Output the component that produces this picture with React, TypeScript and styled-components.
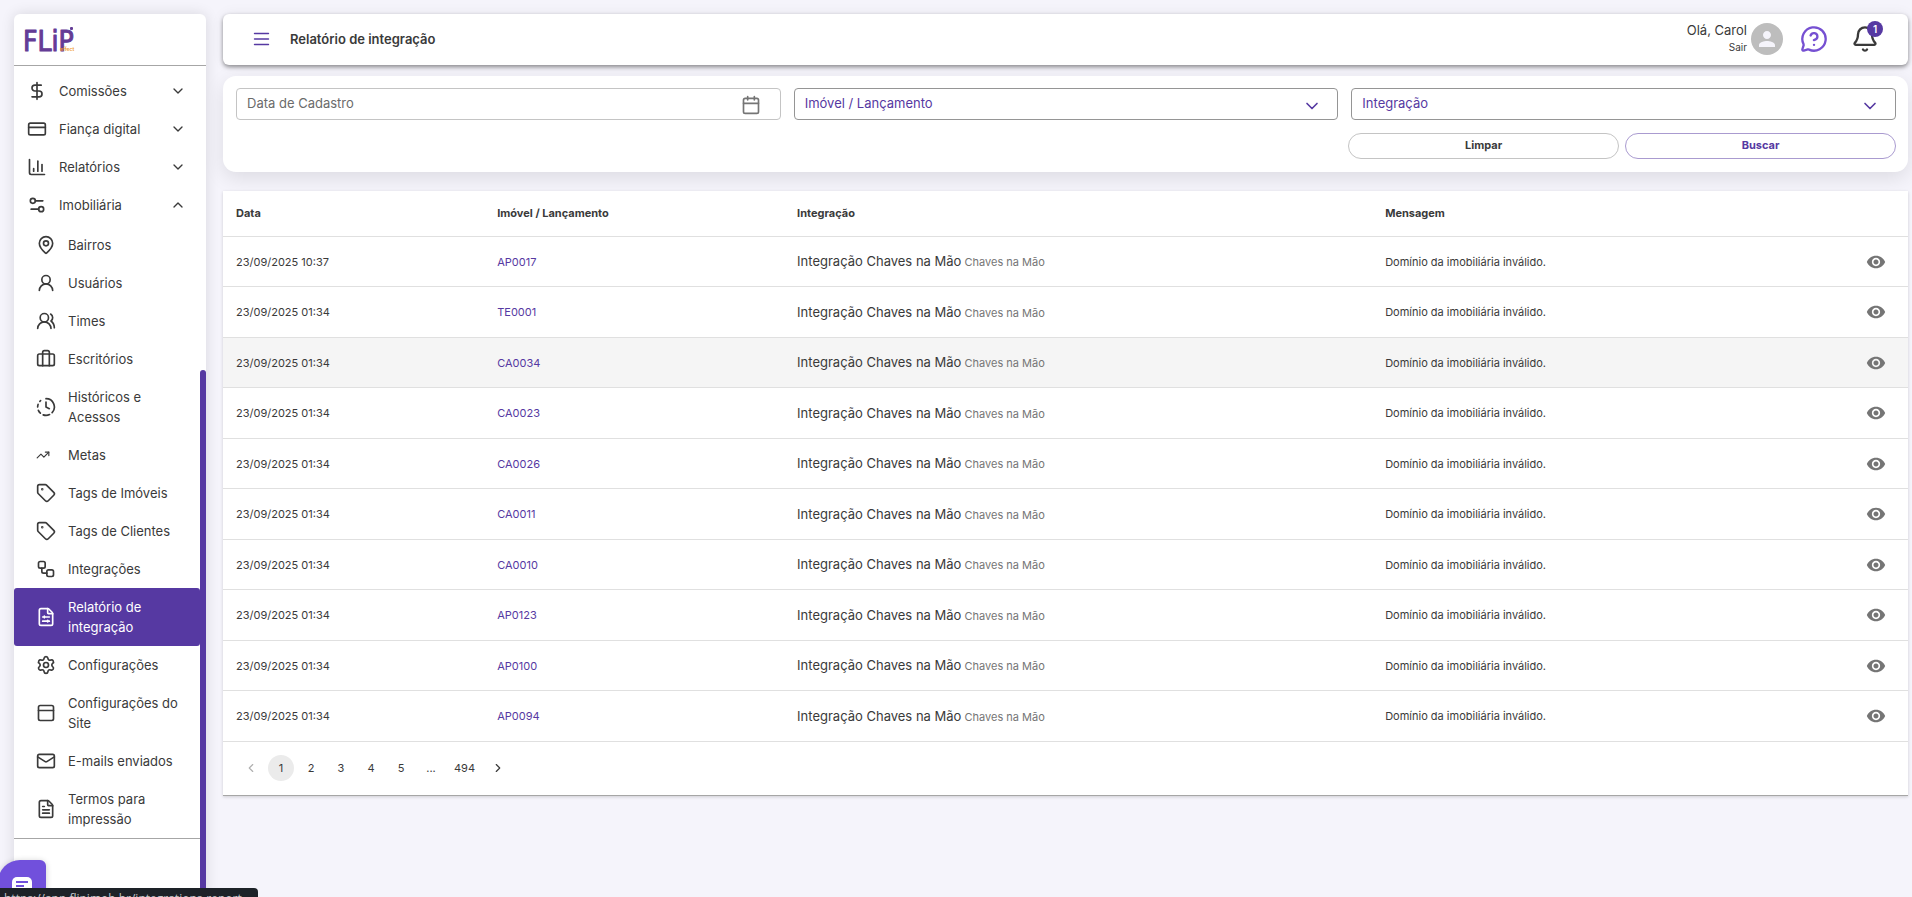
import React from "react";
import styled, { createGlobalStyle } from "styled-components";
import {
  Bell,
  Briefcase,
  Calendar,
  ChartColumn,
  ChevronDown,
  ChevronLeft,
  ChevronRight,
  ChevronUp,
  ClockFading,
  CreditCard,
  DollarSign,
  FileSliders,
  FileText,
  Mail,
  MapPin,
  MessageCircleQuestionMark,
  PanelTop,
  Settings,
  Settings2,
  Tag,
  TrendingUp,
  UserRound,
  UsersRound,
  Workflow,
  type LucideIcon,
} from "lucide-react";
import { MdPerson, MdVisibility } from "react-icons/md";

const c = {
  page: "#f5f4fb",
  text: "#3a3a3a",
  muted: "#757575",
  brand: "#5639a2",
  line: "#e0e0e0",
};

const GlobalStyle = createGlobalStyle`
  *, *::before, *::after { box-sizing: border-box; }
  body {
    margin: 0;
    background: ${c.page};
    color: ${c.text};
    font-family: Inter, "Liberation Sans", sans-serif;
    font-size: 13px;
    line-height: 20px;
    overflow: hidden;
  }
  button, input, select { font: inherit; color: inherit; }
  button { cursor: pointer; }
  a { color: inherit; text-decoration: none; }
`;

const Shell = styled.div`
  display: flex;
  align-items: flex-start;
  gap: 17px;
  height: 100vh;
  padding: 14px 4px 0 14px;
`;

const Sidebar = styled.aside`
  display: flex;
  flex-direction: column;
  flex: 0 0 192px;
  align-self: stretch;
  background: #fff;
  border-radius: 6px 6px 0 0;
  box-shadow: 0 0 14px rgba(0, 0, 0, 0.12);
`;

const Brand = styled.a`
  display: flex;
  flex: 0 0 52px;
  padding: 11px 9px 0;
  border-bottom: 1px solid #a6a6a6;
`;

const SidebarBody = styled.div`
  display: flex;
  flex: 1;
  min-height: 0;
`;

const Nav = styled.nav`
  flex: 1;
  min-width: 0;
  overflow: hidden;
`;

const NavList = styled.ul`
  margin: 0;
  padding: 6px 0 0;
  list-style: none;
  border-bottom: 1px solid #a6a6a6;
`;

const SubList = styled.ul`
  margin: 0;
  padding: 2px 0 0;
  list-style: none;
`;

const NavGroup = styled.button`
  display: flex;
  align-items: center;
  gap: 12px;
  width: 100%;
  padding: 9px 14px 9px 13px;
  border: 0;
  background: none;
  text-align: left;
`;

const NavLink = styled.a<{ $active?: boolean }>`
  display: flex;
  align-items: center;
  gap: 12px;
  padding: 9px 20px 9px 22px;
  border-radius: 3px;
  background: ${(p) => (p.$active ? c.brand : "transparent")};
  color: ${(p) => (p.$active ? "#fff" : c.text)};
`;

const NavIcon = styled.span`
  display: flex;
  flex: 0 0 20px;
  align-items: center;
`;

const NavLabel = styled.span`
  flex: 1;
`;

const Rail = styled.div`
  flex: 0 0 6px;
  padding-top: 304px;
`;

const Thumb = styled.div`
  height: 100%;
  border-radius: 3px 3px 0 0;
  background: ${c.brand};
`;

const Main = styled.main`
  display: flex;
  flex: 1;
  flex-direction: column;
  min-width: 0;
`;

const TopBar = styled.header`
  display: flex;
  align-items: center;
  height: 51px;
  padding: 0 29px 1px 30px;
  border-radius: 6px;
  background: #fff;
  box-shadow: 0 2px 4px rgba(0, 0, 0, 0.42), 0 0 14px rgba(0, 0, 0, 0.06);
`;

const IconButton = styled.button`
  position: relative;
  display: flex;
  align-items: center;
  justify-content: center;
  padding: 0;
  border: 0;
  background: none;
`;

const Title = styled.h1`
  flex: 1;
  margin: 0 0 0 20px;
  font-size: 13px;
  font-weight: 600;
`;

const User = styled.div`
  display: flex;
  align-items: center;
  gap: 4px;
  margin-right: 17px;
`;

const UserText = styled.div`
  display: flex;
  flex-direction: column;
  align-items: flex-end;
  line-height: 17px;
`;

const Logout = styled.a`
  font-size: 10px;
`;

const Avatar = styled.span`
  display: flex;
  align-items: center;
  justify-content: center;
  width: 32px;
  height: 32px;
  border-radius: 50%;
  background: #bdbdbd;
  color: ${c.page};
`;

const TopActions = styled.div`
  display: flex;
  gap: 23px;
`;

const Badge = styled.span`
  position: absolute;
  top: -4px;
  right: -4px;
  width: 16px;
  height: 16px;
  border-radius: 50%;
  background: ${c.brand};
  color: #fff;
  font-size: 10px;
  font-weight: 600;
  line-height: 16px;
  text-align: center;
`;

const Filters = styled.form`
  display: flex;
  flex-direction: column;
  gap: 13px;
  margin-top: 11px;
  padding: 12px 12px 13px 13px;
  border-radius: 13px;
  background: #fff;
  box-shadow: 0 6px 20px rgba(0, 0, 0, 0.1);
`;

const Fields = styled.div`
  display: grid;
  grid-template-columns: repeat(3, 1fr);
  gap: 13px;
`;

const Field = styled.label<{ $strong?: boolean }>`
  position: relative;
  display: flex;
  height: 32px;
  border: 1px solid ${(p) => (p.$strong ? "#959595" : "#c4c4c4")};
  border-radius: 4px;
`;

const DateInput = styled.input`
  flex: 1;
  min-width: 0;
  padding: 0 48px 2px 10px;
  border: 0;
  outline: 0;
  background: none;
  &::placeholder { color: #6b6b6b; opacity: 1; }
`;

const Select = styled.select`
  flex: 1;
  appearance: none;
  padding: 0 48px 2px 10px;
  border: 0;
  outline: 0;
  background: none;
  color: ${c.brand};
`;

const FieldIcon = styled.span<{ $select?: boolean }>`
  position: absolute;
  top: ${(p) => (p.$select ? 7 : 6)}px;
  right: ${(p) => (p.$select ? 15 : 19)}px;
  display: flex;
  color: ${(p) => (p.$select ? c.brand : c.muted)};
  pointer-events: none;
`;

const FilterActions = styled.div`
  display: grid;
  grid-template-columns: 1fr 1fr;
  gap: 6px;
  align-self: flex-end;
  width: 33%;
`;

const PillButton = styled.button<{ $primary?: boolean }>`
  height: 26px;
  padding: 0 0 2px;
  border: 1px solid ${(p) => (p.$primary ? "#aa9bd0" : "#c4c4c4")};
  border-radius: 13px;
  background: #fff;
  color: ${(p) => (p.$primary ? c.brand : c.text)};
  font-size: 11px;
  font-weight: 700;
`;

const Results = styled.section`
  margin-top: 19px;
  background: #fff;
  border-bottom: 1px solid #a6a6a6;
  box-shadow: 0 1px 3px rgba(0, 0, 0, 0.16);
`;

const Table = styled.table`
  width: 100%;
  border-spacing: 0;
  table-layout: fixed;
  font-size: 11px;
`;

const Row = styled.tr<{ $hover?: boolean }>`
  height: 50px;
  background: ${(p) => (p.$hover ? "#f5f5f5" : "transparent")};
  &:nth-child(even) { height: 51px; }
`;

const HeadCell = styled.th<{ $width?: string }>`
  width: ${(p) => p.$width ?? "auto"};
  height: 46px;
  padding: 0 13px 2px;
  border-bottom: 1px solid ${c.line};
  font-weight: 700;
  text-align: left;
`;

const Cell = styled.td`
  padding: 0 13px;
  border-bottom: 1px solid ${c.line};
`;

const ActionCell = styled(Cell)`
  padding-right: 22px;
  color: ${c.muted};
`;

const RowAction = styled(IconButton)`
  margin-left: auto;
`;

const Code = styled.a`
  color: ${c.brand};
`;

const Integration = styled.span`
  font-size: 13px;
`;

const Partner = styled.span`
  color: ${c.muted};
`;

const Pager = styled.nav`
  display: flex;
  align-items: center;
  gap: 4px;
  height: 53px;
  padding: 0 15px 1px;
  font-size: 11px;
`;

const PageButton = styled.button<{ $active?: boolean }>`
  display: flex;
  align-items: center;
  justify-content: center;
  min-width: 26px;
  height: 26px;
  padding: 0 6px;
  border: 0;
  border-radius: 13px;
  background: ${(p) => (p.$active ? "#ebebeb" : "none")};
  &:disabled { color: #b0b0b0; }
`;

const PageGap = styled.span`
  width: 26px;
  text-align: center;
`;

const ChatButton = styled.button`
  position: fixed;
  bottom: -9px;
  left: -2px;
  display: flex;
  align-items: center;
  justify-content: center;
  width: 48px;
  height: 46px;
  padding: 4px 0 0;
  border: 0;
  border-radius: 22px 6px 6px 22px;
  background: #7150dc;
  box-shadow: 0 1px 6px rgba(0, 0, 0, 0.2);
`;

const StatusUrl = styled.div`
  position: fixed;
  bottom: 0;
  left: 0;
  width: 258px;
  height: 9px;
  padding: 3px 4px 0;
  overflow: hidden;
  border-radius: 0 4px 0 0;
  background: #1d2228;
  color: #c3c7cb;
  font-family: "Open Sans", sans-serif;
  font-size: 12px;
  line-height: 16px;
  white-space: nowrap;
`;

function Logo() {
  return (
    <svg width="56" height="34" viewBox="0 0 56 34" role="img" aria-label="Flip effect">
      <text
        x="0"
        y="26"
        fill="#643c96"
        stroke="#643c96"
        strokeWidth="1"
        strokeLinejoin="round"
        fontFamily="'DejaVu Sans Condensed', 'DejaVu Sans', sans-serif"
        fontSize="28"
      >
        FLiP
        <tspan x="37" y="26" fill="#f09a2c" stroke="none" fontFamily="Inter, sans-serif" fontSize="5" fontWeight="600">
          effect
        </tspan>
      </text>
      <rect x="47" y="2" width="3" height="3" rx="1" fill="#643c96" />
    </svg>
  );
}

type Item = { label: string; icon: LucideIcon; active?: boolean; small?: boolean };

const groups: Item[] = [
  { label: "Comissões", icon: DollarSign },
  { label: "Fiança digital", icon: CreditCard },
  { label: "Relatórios", icon: ChartColumn },
  { label: "Imobiliária", icon: Settings2, active: true },
];

const subItems: Item[] = [
  { label: "Bairros", icon: MapPin },
  { label: "Usuários", icon: UserRound },
  { label: "Times", icon: UsersRound },
  { label: "Escritórios", icon: Briefcase },
  { label: "Históricos e Acessos", icon: ClockFading },
  { label: "Metas", icon: TrendingUp, small: true },
  { label: "Tags de Imóveis", icon: Tag },
  { label: "Tags de Clientes", icon: Tag },
  { label: "Integrações", icon: Workflow },
  { label: "Relatório de integração", icon: FileSliders, active: true },
  { label: "Configurações", icon: Settings },
  { label: "Configurações do Site", icon: PanelTop },
  { label: "E-mails enviados", icon: Mail },
  { label: "Termos para impressão", icon: FileText },
];

const rows = [
  ["23/09/2025 10:37", "AP0017"],
  ["23/09/2025 01:34", "TE0001"],
  ["23/09/2025 01:34", "CA0034"],
  ["23/09/2025 01:34", "CA0023"],
  ["23/09/2025 01:34", "CA0026"],
  ["23/09/2025 01:34", "CA0011"],
  ["23/09/2025 01:34", "CA0010"],
  ["23/09/2025 01:34", "AP0123"],
  ["23/09/2025 01:34", "AP0100"],
  ["23/09/2025 01:34", "AP0094"],
];

export default function App() {
  return (
    <>
      <GlobalStyle />
      <Shell>
        <Sidebar>
          <Brand href="#">
            <Logo />
          </Brand>
          <SidebarBody>
            <Nav aria-label="Menu principal">
              <NavList>
                {groups.map(({ label, icon: Icon, active }) => (
                  <li key={label}>
                    <NavGroup type="button" aria-expanded={!!active}>
                      <NavIcon>
                        <Icon size={20} />
                      </NavIcon>
                      <NavLabel>{label}</NavLabel>
                      {active ? <ChevronUp size={16} /> : <ChevronDown size={16} />}
                    </NavGroup>
                    {active && (
                      <SubList>
                        {subItems.map((item) => (
                          <li key={item.label}>
                            <NavLink href="#" $active={item.active}>
                              <NavIcon>
                                <item.icon size={item.small ? 14 : 20} />
                              </NavIcon>
                              <NavLabel>{item.label}</NavLabel>
                            </NavLink>
                          </li>
                        ))}
                      </SubList>
                    )}
                  </li>
                ))}
              </NavList>
            </Nav>
            <Rail>
              <Thumb />
            </Rail>
          </SidebarBody>
        </Sidebar>

        <Main>
          <TopBar>
            <IconButton type="button" aria-label="Abrir menu">
              <svg width="17" height="14" viewBox="0 0 17 14" fill="none" stroke={c.brand} strokeLinecap="round">
                <path d="M1.5 1.5h14M1.5 7h14M1.5 12.5h14" strokeWidth="1.4" />
              </svg>
            </IconButton>
            <Title>Relatório de integração</Title>
            <User>
              <UserText>
                <span>Olá, Carol</span>
                <Logout href="#">Sair</Logout>
              </UserText>
              <Avatar>
                <MdPerson size={24} />
              </Avatar>
            </User>
            <TopActions>
              <IconButton type="button" aria-label="Ajuda">
                <MessageCircleQuestionMark size={28} color="#7650d2" />
              </IconButton>
              <IconButton type="button" aria-label="Notificações">
                <Bell size={28} />
                <Badge>1</Badge>
              </IconButton>
            </TopActions>
          </TopBar>

          <Filters onSubmit={(e) => e.preventDefault()}>
            <Fields>
              <Field>
                <DateInput placeholder="Data de Cadastro" aria-label="Data de Cadastro" />
                <FieldIcon>
                  <Calendar size={20} />
                </FieldIcon>
              </Field>
              <Field $strong>
                <Select aria-label="Imóvel / Lançamento">
                  <option>Imóvel / Lançamento</option>
                </Select>
                <FieldIcon $select>
                  <ChevronDown size={20} />
                </FieldIcon>
              </Field>
              <Field $strong>
                <Select aria-label="Integração">
                  <option>Integração</option>
                </Select>
                <FieldIcon $select>
                  <ChevronDown size={20} />
                </FieldIcon>
              </Field>
            </Fields>
            <FilterActions>
              <PillButton type="reset">Limpar</PillButton>
              <PillButton type="submit" $primary>
                Buscar
              </PillButton>
            </FilterActions>
          </Filters>

          <Results>
            <Table>
              <thead>
                <tr>
                  <HeadCell $width="15.5%">Data</HeadCell>
                  <HeadCell $width="17.8%">Imóvel / Lançamento</HeadCell>
                  <HeadCell $width="34.9%">Integração</HeadCell>
                  <HeadCell>Mensagem</HeadCell>
                  <HeadCell $width="80px" aria-label="Ações" />
                </tr>
              </thead>
              <tbody>
                {rows.map(([date, code]) => (
                  <Row key={code} $hover={code === "CA0034"}>
                    <Cell>{date}</Cell>
                    <Cell>
                      <Code href="#">{code}</Code>
                    </Cell>
                    <Cell>
                      <Integration>Integração Chaves na Mão</Integration> <Partner>Chaves na Mão</Partner>
                    </Cell>
                    <Cell>Domínio da imobiliária inválido.</Cell>
                    <ActionCell>
                      <RowAction type="button" aria-label={`Ver ${code}`}>
                        <MdVisibility size={20} />
                      </RowAction>
                    </ActionCell>
                  </Row>
                ))}
              </tbody>
            </Table>
            <Pager aria-label="Paginação">
              <PageButton type="button" disabled aria-label="Anterior">
                <ChevronLeft size={14} />
              </PageButton>
              {[1, 2, 3, 4, 5].map((n) => (
                <PageButton type="button" key={n} $active={n === 1}>
                  {n}
                </PageButton>
              ))}
              <PageGap>...</PageGap>
              <PageButton type="button">494</PageButton>
              <PageButton type="button" aria-label="Próxima">
                <ChevronRight size={14} />
              </PageButton>
            </Pager>
          </Results>
        </Main>
      </Shell>
      <ChatButton type="button" aria-label="Abrir chat">
        <svg width="20" height="20" viewBox="0 0 20 20">
          <rect x="0" y="2" width="20" height="18" rx="5" fill="#fff" />
          <path d="M4 7h12M4 11h8" stroke="#7150dc" strokeWidth="2" />
        </svg>
      </ChatButton>
      <StatusUrl>https://app.flipimob.br/integrations-report</StatusUrl>
    </>
  );
}
